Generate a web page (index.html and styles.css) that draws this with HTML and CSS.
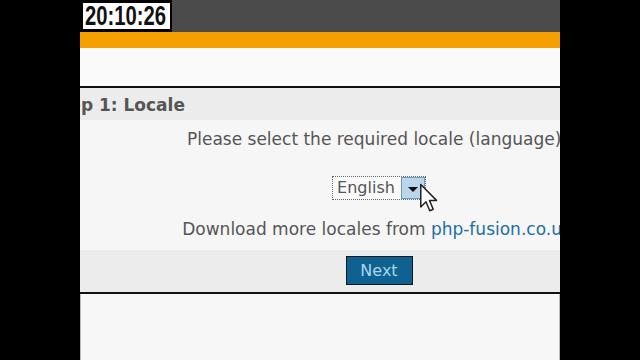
FILE: index.html
```html
<!DOCTYPE html>
<html lang="en">
<head>
    <meta charset="UTF-8">
    <title>PHP-Fusion Setup</title>
    <link rel="stylesheet" href="styles.css">
</head>
<body>
<div class="frame">
    <div class="clock"><div class="clock-box"><span>20:10:26</span></div></div>
    <div class="topbar"></div>
    <div class="stripe"></div>
    <div class="banner"></div>

    <div class="panel">
        <h2 class="panel-title">Step 1: Locale</h2>
        <div class="panel-body">
            <p>Please select the required locale (language):</p>
            <div class="select">
                <span class="select-text">English</span>
                <span class="select-btn"><span class="arrow"></span></span>
            </div>
            <p>Download more locales from <a href="#">php-fusion.co.uk</a></p>
        </div>
        <div class="panel-foot">
            <button class="btn">Next</button>
        </div>
    </div>
    <div class="below"></div>

    <!-- mouse pointer -->
    <svg class="cursor" width="20" height="30" viewBox="0 0 13 20">
        <path d="M1 1 L1 16 L4.5 12.5 L7 18.5 L9.3 17.5 L6.8 11.6 L11.5 11.6 Z" fill="#fff" stroke="#222" stroke-width="1" stroke-linejoin="round"/>
    </svg>
</div>
</body>
</html>
```

FILE: styles.css
```css
* {
    margin: 0;
    padding: 0;
    box-sizing: border-box;
}
body {
    background: #000;
    height: 360px;
    overflow: hidden;
    font-family: 'DejaVu Sans', Verdana, sans-serif;
}
.frame {
    position: relative;
    margin-left: 80px;
    width: 480px;
    height: 360px;
    overflow: hidden;
    background: #f7f7f7;
}
/*时间戳*/
.clock {
    position: absolute;
    top: 0;
    left: 0;
    width: 92px;
    height: 32px;
    background: #000;
    padding: 3px 2px 3px 3px;
}
.clock-box {
    width: 87px;
    height: 26px;
    background: #fff;
    padding-left: 2px;
}
.clock-box span {
    display: inline-block;
    color: #111;
    font-family: 'Liberation Sans', Arial, sans-serif;
    font-weight: bold;
    font-size: 27px;
    line-height: 27px;
    white-space: nowrap;
    transform: scaleX(0.75);
    transform-origin: left center;
}
.topbar {
    height: 32px;
    background: #4b4b4b;
}
.stripe {
    height: 16px;
    background: #f59f00;
}
.banner {
    height: 40px;
    background: #fafafa;
    border-bottom: 2px solid #111;
}
/*面板*/
.panel {
    margin-left: -40px;
    width: 678px;
}
.panel-title {
    height: 32px;
    line-height: 35px;
    padding-left: 9px;
    background: #ececec;
    color: #555;
    font-size: 17px;
    font-weight: bold;
    white-space: nowrap;
}
.panel-body {
    height: 130px;
    padding-top: 9px;
    background: #f6f6f6;
    text-align: center;
    color: #555;
    font-size: 17px;
    line-height: 20px;
    white-space: nowrap;
}
.panel-body p {
    padding-right: 4px;
}
.panel-body a {
    color: #1f6fa3;
    text-decoration: none;
}
.select {
    display: inline-flex;
    align-items: center;
    height: 24px;
    margin: 27px 0 19px;
    padding: 1px 0 1px 4px;
    border: 1px dotted #666;
    background: #fafafa;
}
.select-text {
    font-size: 16px;
    line-height: 20px;
    padding-right: 6px;
}
.select-btn {
    display: flex;
    align-items: center;
    justify-content: center;
    width: 24px;
    height: 22px;
    background: #b9d6ea;
    border: 1px solid #6b9cc0;
}
.arrow {
    width: 0;
    height: 0;
    border-left: 5px solid transparent;
    border-right: 5px solid transparent;
    border-top: 5px solid #111;
    margin-top: 3px;
}
.panel-foot {
    height: 44px;
    padding-top: 6px;
    background: #ececec;
    border-bottom: 2px solid #111;
    text-align: center;
}
.btn {
    width: 67px;
    height: 29px;
    background: #0f6190;
    border: 1px solid #0a1a24;
    color: #a9d6ee;
    font-family: 'DejaVu Sans', Verdana, sans-serif;
    font-size: 16px;
}
.below {
    height: 66px;
    border-left: 1px solid #bbb;
    border-right: 1px solid #bbb;
    background: #f7f7f7;
}
.cursor {
    position: absolute;
    left: 339px;
    top: 183px;
}
```
